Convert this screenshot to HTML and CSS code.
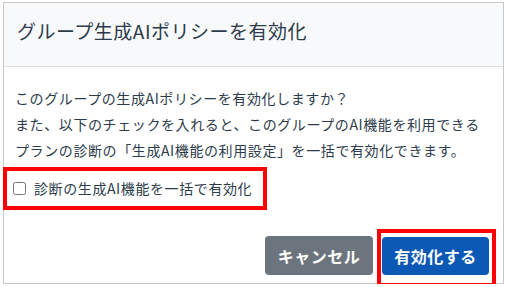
FILE: index.html
```html
<!DOCTYPE html>
<html lang="ja">
<head>
<meta charset="UTF-8" />
<meta name="viewport" content="width=device-width, initial-scale=1" />
<title>生成AIポリシー</title>
<link rel="stylesheet" href="styles.css">
</head>
<body>

<div class="modal" role="dialog" aria-labelledby="modal-title">
  <header class="modal-header">
    <h2 id="modal-title">グループ生成AIポリシーを有効化</h2>
  </header>

  <div class="modal-body">
    <p class="message">
      このグループの生成AIポリシーを有効化しますか？<br>
      また、以下のチェックを入れると、このグループのAI機能を利用できる<br>
      プランの診断の「生成AI機能の利用設定」を一括で有効化できます。
    </p>
    <label class="check-row marked">
      <input type="checkbox" id="bulk-enable">
      <span>診断の生成AI機能を一括で有効化</span>
    </label>
  </div>

  <footer class="modal-footer">
    <button class="btn btn-cancel">キャンセル</button>
    <button class="btn btn-primary marked-btn">有効化する</button>
  </footer>
</div>

</body>
</html>
```

FILE: styles.css
```css
body {
  margin: 0;
  padding: 2px 0 0 3px;
  font-family: "Noto Sans CJK JP", "Noto Sans", sans-serif;
  color: #2d3b4b;
  background: #fff;
}
.modal {
  width: 501px;
  height: 282px;
  box-sizing: border-box;
  border: 1px solid #c9c9c9;
  display: flex;
  flex-direction: column;
}
.modal-header {
  background: #f8f9fb;
  border-bottom: 1px solid #dde1e6;
  height: 64px;
  box-sizing: border-box;
  padding: 13px 13px 0;
}
.modal-header h2 {
  margin: 0;
  font-size: 19px;
  font-weight: 400;
  line-height: 30px;
  letter-spacing: 0.5px;
}
.modal-body {
  padding: 18px 11px 0;
  font-size: 14px;
  letter-spacing: 0.6px;
}
.message {
  margin: 0;
  line-height: 26px;
}
.check-row {
  display: flex;
  align-items: center;
  width: fit-content;
  margin-top: 12px;
  margin-left: -2px;
  line-height: 26px;
  position: relative;
}
.check-row input {
  width: 13px;
  height: 13px;
  margin: 0 8px 0 0;
}
/* red annotation frames */
.marked::after,
.marked-btn::after {
  content: "";
  position: absolute;
  border: 4px solid #f00;
  pointer-events: none;
}
.marked::after {
  top: -8px; bottom: -9px; left: -10px; right: -15px;
}
.modal-footer {
  margin-top: auto;
  display: flex;
  justify-content: flex-end;
  align-items: flex-end;
  gap: 9px;
  padding: 0 14px 8px 0;
}
.btn {
  font-family: inherit;
  font-size: 16px;
  font-weight: 700;
  letter-spacing: 0.5px;
  color: #fff;
  border: none;
  border-radius: 4px;
  height: 38px;
  padding: 0 12px;
  cursor: pointer;
}
.btn-cancel {
  background: #6c757d;
  height: 39px;
  width: 108px;
}
.btn-primary {
  background: #0c59b5;
  width: 107px;
  position: relative;
}
.marked-btn::after {
  top: -8px; bottom: -12px; left: -5px; right: -7px;
}
```
